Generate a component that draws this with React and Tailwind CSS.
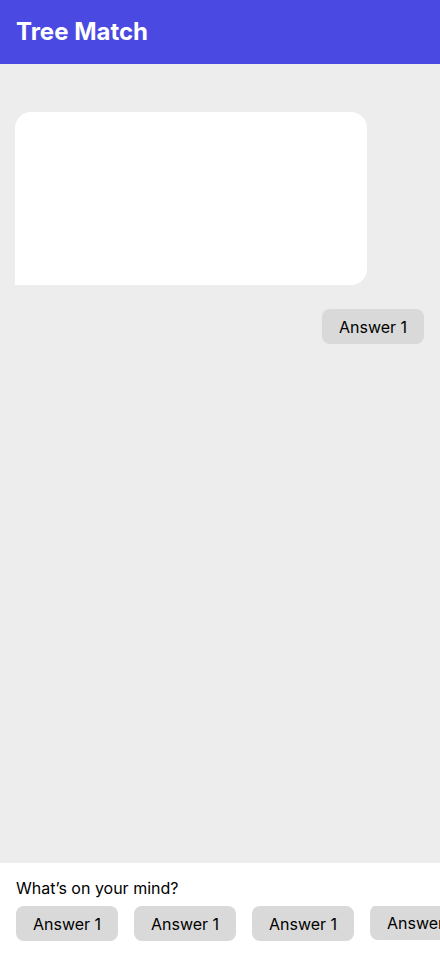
import React from "react";

const font = { fontFamily: "Inter, 'Noto Sans', sans-serif" };

function AnswerChip({ label, className = "" }) {
  return (
    <button
      type="button"
      className={`shrink-0 h-[35px] px-4 rounded-lg bg-[#d9d9d9] text-[16px] text-black flex items-center justify-center ${className}`}
    >
      {label}
    </button>
  );
}

export default function App() {
  const options = ["Answer 1", "Answer 1", "Answer 1", "Answer 1"];

  return (
    <div className="w-[440px] h-[956px] flex flex-col bg-[#ededed] overflow-hidden" style={font}>
      <header className="h-16 shrink-0 bg-[#4a4ae2] flex items-center px-4">
        <h1 className="text-2xl font-bold text-white">Tree Match</h1>
      </header>

      <main className="flex-1 flex flex-col pt-12 pl-[15px] pr-4">
        <div className="w-[352px] h-[173px] bg-white rounded-t-2xl rounded-br-2xl" />
        <div className="flex justify-end mt-6">
          <AnswerChip label="Answer 1" className="w-[102px]" />
        </div>
      </main>

      <footer className="shrink-0 h-[93px] bg-white pt-[15px] pl-4">
        <p className="text-[16px] text-black leading-5">What’s on your mind?</p>
        <div className="flex items-start gap-4 mt-[8px] overflow-hidden">
          {options.map((o, i) => (
            <AnswerChip key={i} label={o} className={i === 3 ? "w-[102px] -mt-px" : "w-[102px]"} />
          ))}
        </div>
      </footer>
    </div>
  );
}
